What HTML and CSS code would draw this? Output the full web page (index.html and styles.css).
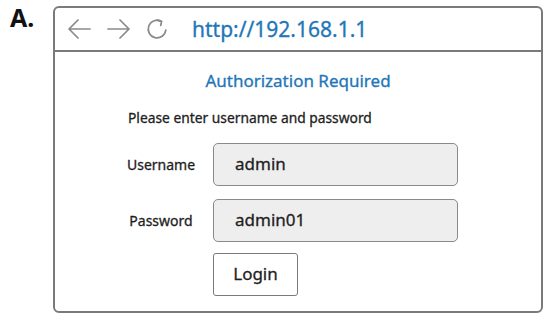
FILE: index.html
```html
<!DOCTYPE html>
<html lang="en">

<head>
    <meta charset="UTF-8">
    <title>Router login</title>
    <link rel="stylesheet" href="styles.css">
</head>

<body>
    <div class="page">
        <div class="figLabel">A.</div>
        <div class="browser">
            <div class="toolbar">
                <svg class="navIcon" width="24" height="20" viewBox="0 0 24 20">
                    <path d="M23 10H2M11 1L2 10l9 9" />
                </svg>
                <svg class="navIcon fwd" width="24" height="20" viewBox="0 0 24 20">
                    <path d="M1 10h21M13 1l9 9-9 9" />
                </svg>
                <svg class="navIcon reload" width="22" height="22" viewBox="0 0 22 22">
                    <path d="M19.8 12A8.8 8.8 0 1 1 15.4 3.4" />
                    <path d="M11.4 2.4L15.6 3.3l-0.9 4.2" />
                </svg>
                <span class="url">http://192.168.1.1</span>
            </div>
            <div class="content">
                <h1>Authorization Required</h1>
                <p class="hint">Please enter username and password</p>
                <div class="form">
                    <span class="lbl">Username</span>
                    <div class="field">admin</div>
                    <span class="lbl">Password</span>
                    <div class="field">admin01</div>
                    <span></span>
                    <div class="btn">Login</div>
                </div>
            </div>
        </div>
    </div>
</body>

</html>
```

FILE: styles.css
```css
* {
    box-sizing: border-box;
}

body {
    margin: 0;
    background-color: white;
    font-family: "Noto Sans", "Open Sans", sans-serif;
    color: #1e1e1e;
    -webkit-text-stroke: 0.3px currentColor;
}

.page {
    display: flex;
    padding: 6px 0 0 10px;
}

.figLabel {
    width: 43px;
    font-size: 25px;
    font-weight: 700;
    line-height: 30px;
    margin-top: -4px;
    color: #111;
    -webkit-text-stroke: 0;
}

.browser {
    width: 490px;
    height: 307px;
    border: 2px solid #7a7a7a;
    border-radius: 6px;
}

.toolbar {
    height: 44px;
    border-bottom: 2px solid #7a7a7a;
    display: flex;
    align-items: center;
    padding-left: 12px;
}

.navIcon {
    fill: none;
    stroke: #8a8a8a;
    stroke-width: 1.7;
    stroke-linecap: round;
    stroke-linejoin: round;
}

.fwd {
    margin-left: 16px;
}

.reload {
    margin-left: 15px;
}

.url {
    margin-left: 24px;
    font-size: 21px;
    color: #2276b8;
    line-height: 24px;
}

.content {
    padding: 19px 0 0 73px;
}

h1 {
    margin: 0 0 0 -73px;
    text-align: center;
    font-size: 17px;
    font-weight: 400;
    line-height: 20px;
    color: #2276b8;
}

.hint {
    margin: 18px 0 0 0;
    font-size: 13.8px;
    line-height: 18px;
}

.form {
    margin: 16px 0 0 -6px;
    display: grid;
    grid-template-columns: 78px 245px;
    column-gap: 13px;
    row-gap: 13px;
    align-items: center;
}

.lbl {
    font-size: 14px;
    text-align: center;
}

.field {
    height: 43px;
    background-color: #efeeee;
    border: 1.5px solid #8a8a8a;
    border-radius: 5px;
    font-size: 17px;
    line-height: 40px;
    padding-left: 21px;
}

.btn {
    width: 85px;
    height: 43px;
    margin-top: -2px;
    border: 1.5px solid #7a7a7a;
    border-radius: 3px;
    font-size: 17px;
    line-height: 40px;
    text-align: center;
}
```
